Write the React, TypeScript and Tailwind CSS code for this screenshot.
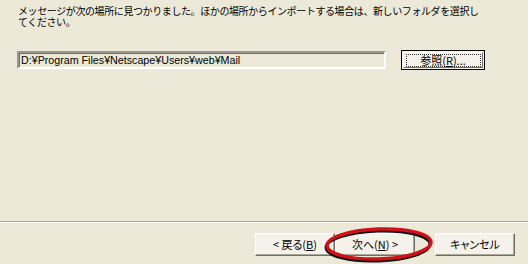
const jp = "font-['MS_UI_Gothic','Noto_Sans_CJK_JP',sans-serif]";
const palt = "[font-feature-settings:'palt']";

function WizButton({ children, className = "" }: { children: React.ReactNode; className?: string }) {
  return (
    <button
      type="button"
      className={`h-[23px] w-[80px] border border-t-white border-l-white border-b-[#716F64] border-r-[#716F64] bg-[#F4F2EA] shadow-[inset_-1px_-1px_0_#ACA899] text-[11px] leading-none text-black ${jp} ${palt} ${className}`}
    >
      {children}
    </button>
  );
}

export default function App() {
  return (
    <div className={`relative flex h-[264px] w-[528px] flex-col bg-[#ECE9D8] ${jp}`}>
      <div className="px-[18px] pt-[5px]">
        <p className="text-[10px] leading-[11px] tracking-[-0.4px] text-black">
          メッセージが次の場所に見つかりました。ほかの場所からインポートする場合は、新しいフォルダを選択し
          <br />
          てください。
        </p>

        <div className="mt-[23px] flex items-center">
          <div className="ml-[-1px] flex h-[18px] w-[369px] items-center border-2 border-t-[#9C9A8C] border-l-[#9C9A8C] border-b-white border-r-white pl-[2px] shadow-[inset_1px_1px_0_#716F64]">
            <span className="font-['Liberation_Sans',Arial,sans-serif] text-[10.7px] leading-none text-black">
              D:¥Program Files¥Netscape¥Users¥web¥Mail
            </span>
          </div>
          <button
            type="button"
            className="ml-[15px] h-[20px] w-[84px] border border-black bg-[#F4F2EA] p-[1px]"
          >
            <span className="flex h-full w-full items-center justify-center border border-t-white border-l-white border-b-[#716F64] border-r-[#716F64]">
              <span className={`flex h-[13px] w-[75px] items-center justify-center border border-dotted border-[#333] text-[11px] leading-none text-black ${palt}`}>
                参照(<span className="underline">R</span>)...
              </span>
            </span>
          </button>
        </div>
      </div>

      <div className="flex-1" />

      <div className="border-t border-[#ACA899]">
        <div className="border-t border-white" />
      </div>

      <div className="flex justify-end pt-[10px] pb-[8px] pr-[13px]">
        <WizButton>
          &lt; 戻る(<span className="underline">B</span>)
        </WizButton>
        <WizButton>
          次へ(<span className="underline">N</span>) &gt;
        </WizButton>
        <WizButton className="ml-[20px]">キャンセル</WizButton>
      </div>

      <svg
        className="pointer-events-none absolute left-[320px] top-[222px]"
        width="120"
        height="42"
        viewBox="0 0 120 42"
      >
        <ellipse cx="58" cy="24" rx="52" ry="15" fill="none" stroke="#111" strokeWidth="3" transform="rotate(-2 58 24)" />
        <ellipse cx="59" cy="22" rx="52" ry="15" fill="none" stroke="#D0101A" strokeWidth="3.5" transform="rotate(-2 59 22)" />
      </svg>
    </div>
  );
}
